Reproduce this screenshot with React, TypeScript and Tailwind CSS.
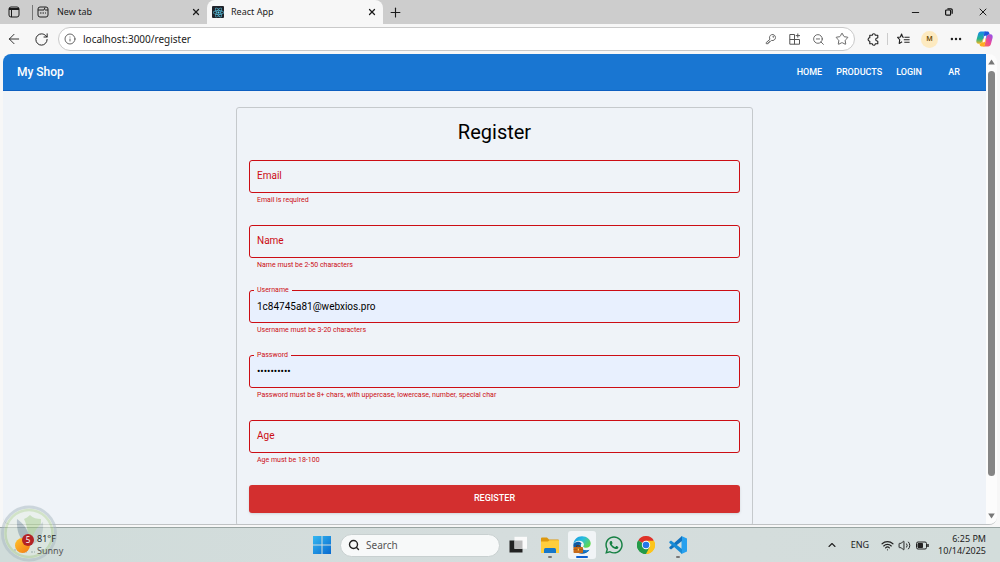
import { type ReactNode } from "react";
import { ArrowLeft, ChevronUp, Ellipsis, Info, Minus, Plus, RotateCw, Search, Star, Volume2, Wifi, X, ZoomOut } from "lucide-react";
import { FaReact, FaWhatsapp } from "react-icons/fa";

type Field = { id: string; label: string; type: string; value: string; helper: string };

const fields: Field[] = [
  { id: "email", label: "Email", type: "email", value: "", helper: "Email is required" },
  { id: "name", label: "Name", type: "text", value: "", helper: "Name must be 2-50 characters" },
  { id: "username", label: "Username", type: "text", value: "1c84745a81@webxios.pro", helper: "Username must be 3-20 characters" },
  { id: "password", label: "Password", type: "password", value: "Passw0rd!1", helper: "Password must be 8+ chars, with uppercase, lowercase, number, special char" },
  { id: "age", label: "Age", type: "text", value: "", helper: "Age must be 18-100" },
];

function IconButton({ label, className = "w-6", children }: { label: string; className?: string; children: ReactNode }) {
  return (
    <button type="button" aria-label={label} className={`flex h-6 shrink-0 items-center justify-center ${className}`}>
      {children}
    </button>
  );
}

function TabStrip() {
  return (
    <div className="flex h-6 shrink-0 items-stretch bg-[#cdcdcd] text-[9px] text-[#1b1b1b]">
      <IconButton label="Tab actions" className="w-7">
        <svg width="12" height="12" viewBox="0 0 12 12" fill="none" stroke="#1b1b1b">
          <rect x="1" y="1" width="10" height="10" rx="2" />
          <path d="M1 3h10" strokeWidth="2" />
          <path d="M3.5 4v7" />
        </svg>
      </IconButton>
      <div className="ml-1 flex w-[175px] items-center pr-[3px]">
        <span className="h-[15px] w-px bg-[#777]" />
        <svg className="ml-1" width="12" height="12" viewBox="0 0 12 12" fill="none" stroke="#222">
          <rect x="1" y="1" width="10" height="10" rx="2" />
          <path d="M1 4h6l1-2.5M8 4h3" />
          <path d="M3 7h1.5M5.5 7H7M8 7h1" />
        </svg>
        <span className="ml-2 flex-1">New tab</span>
        <IconButton label="Close New tab" className="w-4">
          <X size={10} strokeWidth={3} />
        </IconButton>
      </div>
      <div className="flex w-44 items-center rounded-t-lg bg-[#f7f7f7] pl-[5px] pr-[3px]">
        <span className="flex h-3 w-3 items-center justify-center rounded-[1px] bg-[#20232a]">
          <FaReact size={11} color="#61dafb" />
        </span>
        <span className="ml-[7px] flex-1">React App</span>
        <IconButton label="Close React App" className="w-4">
          <X size={10} strokeWidth={3} />
        </IconButton>
      </div>
      <IconButton label="New tab">
        <Plus size={15} strokeWidth={1.8} />
      </IconButton>
      <div className="ml-auto flex">
        <IconButton label="Minimize" className="w-[34px]">
          <Minus size={11} strokeWidth={2.2} />
        </IconButton>
        <IconButton label="Restore" className="w-[34px]">
          <svg width="8" height="8" viewBox="0 0 8 8" fill="none" stroke="#111" strokeWidth="1.2">
            <rect x="0.6" y="2" width="5" height="5.2" rx="1" />
            <path d="M2.4.8H6a1.2 1.2 0 0 1 1.2 1.2v3.8" />
          </svg>
        </IconButton>
        <IconButton label="Close" className="w-[34px]">
          <X size={12} strokeWidth={2} />
        </IconButton>
      </div>
    </div>
  );
}

function Toolbar() {
  return (
    <div className="flex h-[30px] shrink-0 items-center bg-[#f7f7f7] px-1 text-[#222]">
      <IconButton label="Back" className="w-5">
        <ArrowLeft size={16} strokeWidth={1.4} />
      </IconButton>
      <IconButton label="Refresh" className="ml-[6px] w-[22px]">
        <RotateCw size={15} strokeWidth={1.6} />
      </IconButton>
      <div className="ml-[6px] flex h-6 min-w-0 flex-1 items-center rounded-full border border-[#c9c9c9] bg-white pl-[5px] text-[#555]">
        <Info size={12} strokeWidth={1.8} />
        <input
          aria-label="Address"
          defaultValue="localhost:3000/register"
          className="ml-[7px] min-w-0 flex-1 bg-transparent text-[10px] text-[#1b1b1b] outline-none"
        />
        <IconButton label="Passwords">
          <svg width="12" height="12" viewBox="0 0 12 12" fill="none" stroke="#666" strokeWidth="1">
            <path d="M5 6.2A3 3 0 1 1 6.6 7.4L5.6 8.3H4.4v1.2H3.2v1.2H1.2V9.6L5 6.2Z" />
            <circle cx="8.3" cy="3.8" r=".5" />
          </svg>
        </IconButton>
        <IconButton label="Install app">
          <svg width="12" height="12" viewBox="0 0 12 12" fill="none" stroke="#555">
            <path d="M5.5 1.5H.8v9.7h9.7V6.5M.8 6.5h9.7M5.5 1.5v9.7" />
            <path d="M8.8.5v4.2M6.7 2.6H11" />
          </svg>
        </IconButton>
        <IconButton label="Zoom out" className="w-[23px]">
          <ZoomOut size={13} strokeWidth={1.6} />
        </IconButton>
        <IconButton label="Add to favorites">
          <Star size={14} strokeWidth={1.5} />
        </IconButton>
      </div>
      <IconButton label="Extensions" className="ml-[6px] w-6">
        <svg width="13" height="13" viewBox="0 0 13 13" fill="none" stroke="#222" strokeWidth="1.1" strokeLinejoin="round">
          <path d="M2.800 2.200h2.500a1.500 1.500 0 0 1 3 0h2.500v2.300a.5.5 0 0 1-.6.500 1.500 1.500 0 1 0 0 3 .5.5 0 0 1 .6.500v2.300H8.300a1.500 1.500 0 0 1-3 0H2.800V8.200a1.700 1.700 0 0 1 0-3.400Z" />
        </svg>
      </IconButton>
      <span className="ml-[2px] h-3 w-px bg-[#ccc]" />
      <IconButton label="Favorites" className="ml-[3px] w-6">
        <svg width="13" height="12" viewBox="0 0 13 12" fill="none" stroke="#222" strokeWidth="1.1" strokeLinejoin="round">
          <path d="M7.6 4.2 5.6 4 4.6 1 3.4 4 .6 4.4l2.1 2.2-.5 3.9 2.9-1.7" />
          <path d="M8 4.3h4.6M6.800 6.800h5.800M7.300 9.300h5.300" />
        </svg>
      </IconButton>
      <button type="button" aria-label="Profile" className="ml-[6px] h-[17px] w-[17px] rounded-full bg-[#fdeac0] text-[7px] font-semibold text-[#6b4a00]">
        M
      </button>
      <IconButton label="Settings and more" className="ml-[6px] w-6">
        <Ellipsis size={14} strokeWidth={2.2} />
      </IconButton>
      <IconButton label="Copilot" className="ml-1 w-6">
        <svg width="17" height="16" viewBox="0 0 17 16" fill="none">
          <defs>
            <linearGradient id="cpA" x1="0" y1="0" x2="0" y2="1">
              <stop stopColor="#1689ee" />
              <stop offset=".6" stopColor="#24b58b" />
              <stop offset="1" stopColor="#f6b51c" />
            </linearGradient>
            <linearGradient id="cpB" x1="1" y1="0" x2="0" y2="1">
              <stop stopColor="#8b52f4" />
              <stop offset=".5" stopColor="#ec4899" />
              <stop offset="1" stopColor="#fb7a42" />
            </linearGradient>
          </defs>
          <path d="M4.800.5h5.700C9 .5 8.400 1.800 8 3.400L6.500 9.800C6 11.800 5 12.800 3.500 12.800H2.500C.8 12.800 0 11.200.4 9.300L2 3.200C2.500 1.400 3.400.5 4.800.5Z" fill="url(#cpA)" />
          <path d="M12.200 15.500H6.500C8 15.500 8.600 14.200 9 12.600l1.500-6.400C11 4.200 12 3.200 13.500 3.200h1c1.700 0 2.500 1.600 2.100 3.500L15 12.800c-.5 1.800-1.400 2.700-2.800 2.700Z" fill="url(#cpB)" />
          <path d="M8.800.5h2.500c1.300 0 1.700.7 2 1.700l.3 1c-1.600 0-2.600 1-3.100 3L9.900 8.500H6.800L8 3.400C8.200 2 8.300 1 8.800.5Z" fill="#1e55dc" />
          <path d="M8.200 15.500H5.700c-1.300 0-1.700-.7-2-1.700l-.3-1c1.600 0 2.600-1 3.100-3l.6-2.300h3.100L9 12.600c-.2 1.400-.3 2.400-.8 2.900Z" fill="#ffae1f" />
          <path d="M8.300 5 10.500 4.500 8.700 11 6.500 11.500Z" fill="#fff" />
        </svg>
      </IconButton>
    </div>
  );
}

function FormField({ field }: { field: Field }) {
  const filled = field.value !== "";
  return (
    <div className="h-[65px]">
      <div className={`relative h-[33px] rounded-[3px] border border-[#cc0d14] ${filled ? "bg-[#e8f0fe]" : ""}`}>
        <input
          id={field.id}
          type={field.type}
          defaultValue={field.value}
          aria-invalid="true"
          aria-describedby={`${field.id}-helper`}
          className="block h-full w-full bg-transparent px-[7px] text-[10px] text-black outline-none"
        />
        <label
          htmlFor={field.id}
          className={
            filled
              ? "absolute -top-px left-1 h-px bg-[#eff3f8] px-[3px] text-[7px] leading-[1px] text-[#cc0d14]"
              : "absolute left-[7px] top-0 text-[10px] leading-[30px] text-[#cc0d14]"
          }
        >
          {field.label}
        </label>
      </div>
      <p id={`${field.id}-helper`} className="px-2 pt-px text-[7px] leading-3 text-[#cc0d14]">
        {field.helper}
      </p>
    </div>
  );
}

function Shop() {
  return (
    <div className="min-w-0 flex-1 overflow-hidden bg-[#eff3f8] font-[Roboto,sans-serif]">
      <header className="flex h-[37px] items-center justify-between border-b border-[#0d5fc0] bg-[#1976d2] px-[14px] text-white">
        <span className="text-[12px] font-medium">My Shop</span>
        <nav className="flex items-center gap-[14px] pt-px text-[9px] font-medium">
          <a href="#home">HOME</a>
          <a href="#products">PRODUCTS</a>
          <a href="#login">LOGIN</a>
          <button type="button" className="w-9">AR</button>
        </nav>
      </header>
      <main className="mx-auto mt-4 max-w-[517px] rounded-[3px] border border-[#c5c9cc] px-3 pb-3">
        <h1 className="pb-4 pt-3 text-center text-[20px] leading-6 text-black">Register</h1>
        <form noValidate>
          {fields.map((field) => (
            <FormField key={field.id} field={field} />
          ))}
          <button type="submit" className="block h-7 w-full rounded-[3px] bg-[#d32f2f] text-[9px] font-medium text-white shadow">
            REGISTER
          </button>
        </form>
      </main>
    </div>
  );
}

function Scrollbar() {
  return (
    <div aria-hidden="true" className="flex w-[11px] shrink-0 flex-col items-center bg-[#fcfcfc] py-[5px]">
      <svg width="7" height="6" viewBox="0 0 7 6">
        <path d="M3.500.5 6.800 5.500H.2Z" fill="#777" />
      </svg>
      <div className="flex w-full flex-1 flex-col items-center pb-[37px] pt-[6px]">
        <div className="w-[7px] flex-1 rounded-full bg-[#858585]" />
      </div>
      <svg width="7" height="6" viewBox="0 0 7 6">
        <path d="M3.500 5.500.2.5h6.600Z" fill="#777" />
      </svg>
    </div>
  );
}

function TaskButton({ label, state = "idle", children }: { label: string; state?: "idle" | "open" | "active"; children: ReactNode }) {
  return (
    <button type="button" aria-label={label} className="relative flex h-full w-8 items-center justify-center">
      <span className={`flex h-7 w-7 items-center justify-center rounded-[3px] ${state === "active" ? "bg-[#f1f4f6]" : ""}`}>{children}</span>
      {state === "open" && <span className="absolute bottom-1 h-[2px] w-1 rounded-full bg-[#777]" />}
      {state === "active" && <span className="absolute bottom-1 h-[2px] w-3 rounded-full bg-[#0b5ed0]" />}
    </button>
  );
}

function EdgeIcon() {
  return (
    <svg width="18" height="18" viewBox="0 0 18 18">
      <defs>
        <linearGradient id="edgeTop" x1="0" y1="0" x2="1" y2=".6">
          <stop stopColor="#1595df" />
          <stop offset=".5" stopColor="#29bce0" />
          <stop offset="1" stopColor="#60d84e" />
        </linearGradient>
      </defs>
      <path d="M.3 8.500C.8 3.500 4.300.3 9 .3c5 0 8.700 3.400 8.700 7.200 0 2.700-2 4.300-4.600 4.300-1.800 0-2.900-.7-2.900-1.300 0-.4.7-.8.7-2C10.900 6.300 8.800 4.800 6 4.800c-2.600 0-4.900 1.500-5.700 3.700Z" fill="url(#edgeTop)" />
      <path d="M.3 9C.2 13.800 4 17.700 9 17.700c3 0 5.900-1.500 7.400-4-2.500 1.400-6 .9-7.800-1.200C7.200 11 7.300 8.800 8.500 7.500 7.700 6.200 6.200 5.500 4.600 5.700 2.300 6 .5 7.300.3 9Z" fill="#0c59a4" />
      <path d="M5.600 10c0 4.300 3.500 7.500 7.600 6.300 1.500-.5 2.500-1.500 3.200-2.600-2.500 1.400-6 .9-7.800-1.200C7.200 11 7.300 8.800 8.500 7.500 6.800 7 5.600 8.300 5.600 10Z" fill="#1479c9" />
      <path d="M3.500 11V9.800h3.400V11" stroke="#703000" fill="none" />
      <rect x=".5" y="11" width="9.500" height="6" rx=".8" fill="#c76a1a" />
      <path d="M.5 13.500h9.500" stroke="#9a5010" strokeWidth=".6" />
      <path d="M4.700 12.800h1.300v1.600H4.700z" fill="#ffc857" />
    </svg>
  );
}

function ChromeIcon() {
  return (
    <svg width="18" height="18" viewBox="0 0 18 18">
      <path d="M9 9 1.200 4.500A9 9 0 0 1 16.800 4.500Z" fill="#df3228" />
      <path d="M9 9 16.800 4.500A9 9 0 0 1 9 18Z" fill="#fcc51c" />
      <path d="M9 9v9A9 9 0 0 1 1.200 4.500Z" fill="#249a48" />
      <path d="M9 4.800h7.900A9 9 0 0 1 9 18l3.600-7Z" fill="#fcc51c" />
      <path d="M5.400 11 1.200 4.500A9 9 0 0 0 9 18l3.600-7Z" fill="#249a48" />
      <circle cx="9" cy="9" r="4.200" fill="#fff" />
      <circle cx="9" cy="9" r="3.300" fill="#2577e8" />
    </svg>
  );
}

function Watermark() {
  return (
    <svg aria-hidden="true" className="pointer-events-none absolute bottom-0 left-0 opacity-50" width="58" height="57" viewBox="0 0 58 57">
      <circle cx="29" cy="28.500" r="26.500" fill="#e6efe4" stroke="#a9b9c1" strokeWidth="3" />
      <circle cx="29" cy="28.500" r="23.500" fill="none" stroke="#b5d498" strokeWidth="2.500" />
      <path d="M24 14c2-1 4-2 6-4 3 3 7 4 11 4 0 12-3 20-11 26-2-9-2-18-6-26Z" fill="#a5cd88" />
      <path d="M17 14c7 5 13 12 14 27-8-3-15-10-14-27Z" fill="#8299a4" />
      <path d="M43 17c-6 5-11 12-12 23 9-3 13-11 12-23Z" fill="#b3c4c2" />
      <path d="M14 45h6M23 47h4M31 47h4M38 45h6" stroke="#a8b8af" strokeWidth="2" strokeDasharray="2 1" />
    </svg>
  );
}

function Taskbar() {
  return (
    <footer className="relative grid h-[35px] shrink-0 grid-cols-[1fr_auto_1fr] border-t border-[#98a4a2] bg-linear-to-r from-[#d0dcda] via-[#d5dddd] to-[#d3dddb] text-[9px] text-[#222]">
      <Watermark />
      <div className="relative flex items-center gap-[3px] pl-[14px]">
        <svg width="20" height="22" viewBox="0 0 20 22">
          <defs>
            <linearGradient id="sun" x1="0" y1="0" x2="1" y2="1">
              <stop stopColor="#ffc42c" />
              <stop offset="1" stopColor="#f37a14" />
            </linearGradient>
          </defs>
          <circle cx="8.500" cy="11.500" r="7.500" fill="url(#sun)" />
          <circle cx="14" cy="6" r="6" fill="#b32224" />
          <text x="14" y="9" textAnchor="middle" fontSize="8" fill="#fff">5</text>
        </svg>
        <div className="leading-3">
          <div>81°F</div>
          <div className="text-[#555]">Sunny</div>
        </div>
      </div>
      <div className="flex items-center">
        <TaskButton label="Start">
          <svg width="18" height="18" viewBox="0 0 18 18">
            <defs>
              <linearGradient id="win" x1="0" y1="0" x2="1" y2="1">
                <stop stopColor="#35b8f1" />
                <stop offset="1" stopColor="#0869cf" />
              </linearGradient>
            </defs>
            <path d="M0 0h8.500v8.500H0zM9.500 0H18v8.500H9.500zM0 9.500h8.500V18H0zM9.500 9.500H18V18H9.500z" fill="url(#win)" />
          </svg>
        </TaskButton>
        <label className="mx-[2px] flex h-[23px] w-40 items-center rounded-full border border-[#c8d0d0] bg-[#f7f9f9] pl-[7px]">
          <Search size={12} strokeWidth={2.8} />
          <input type="text" aria-label="Search" placeholder="Search" className="ml-[6px] w-24 bg-transparent text-[10px] outline-none placeholder:text-[#555]" />
        </label>
        <TaskButton label="Task view">
          <svg width="18" height="18" viewBox="0 0 18 18">
            <path d="M.5 4.500h13v12H.5z" fill="#222" />
            <path d="M5.500.8H18v12H5.500z" fill="#fafafa" />
            <path d="M5.500 4.500h8v8.300h-8z" fill="#bcbcbc" />
          </svg>
        </TaskButton>
        <TaskButton label="File Explorer" state="open">
          <svg width="18" height="17" viewBox="0 0 18 17">
            <path d="M0 1.500Q0 .5 1 .5h5l2 2h9q1 0 1 1V15H0Z" fill="#dd980f" />
            <path d="M0 4.500h7l1.500-1.200H18V16H0Z" fill="#ffce3d" />
            <path d="M3 16v-3.500q0-1.500 1.500-1.500h9q1.500 0 1.500 1.500V16Z" fill="#1677ca" />
          </svg>
        </TaskButton>
        <TaskButton label="Edge" state="active">
          <EdgeIcon />
        </TaskButton>
        <TaskButton label="WhatsApp">
          <FaWhatsapp size={20} color="#168043" />
        </TaskButton>
        <TaskButton label="Chrome">
          <ChromeIcon />
        </TaskButton>
        <TaskButton label="Visual Studio Code" state="open">
          <svg width="18" height="18" viewBox="0 0 18 18">
            <path d="M12.500 0 18 2.400v13.200L12.500 18Z" fill="#27a0ee" />
            <path d="M13 0v4.900L2 13.500.3 12.200v-1Z" fill="#1272bd" />
            <path d="M13 18v-4.900L2 4.500.3 5.800v1Z" fill="#168bd6" />
          </svg>
        </TaskButton>
      </div>
      <div className="flex items-center justify-end pr-[14px]">
        <ChevronUp size={12} strokeWidth={2.2} />
        <span className="ml-[13px]">ENG</span>
        <Wifi className="ml-3" size={13} strokeWidth={2.2} />
        <Volume2 className="ml-1" size={13} strokeWidth={1.8} />
        <svg className="ml-[5px]" width="13" height="9" viewBox="0 0 13 9" fill="none" stroke="#222">
          <rect x=".5" y="1" width="10" height="7" rx="1.500" />
          <path d="M2 2.500h4.500v4H2z" fill="#222" />
          <path d="M12 3v3" strokeWidth="1.500" />
        </svg>
        <div className="ml-[9px] text-right leading-3">
          <div>6:25 PM</div>
          <div>10/14/2025</div>
        </div>
      </div>
    </footer>
  );
}

export default function App() {
  return (
    <div className="flex h-screen flex-col overflow-hidden bg-[#f7f7f7] font-['Noto_Sans',sans-serif]">
      <TabStrip />
      <Toolbar />
      <div className="mx-[3px] mb-[2px] flex min-h-0 flex-1 overflow-hidden rounded-lg border-b border-[#bfc2c4]">
        <Shop />
        <Scrollbar />
      </div>
      <Taskbar />
    </div>
  );
}
